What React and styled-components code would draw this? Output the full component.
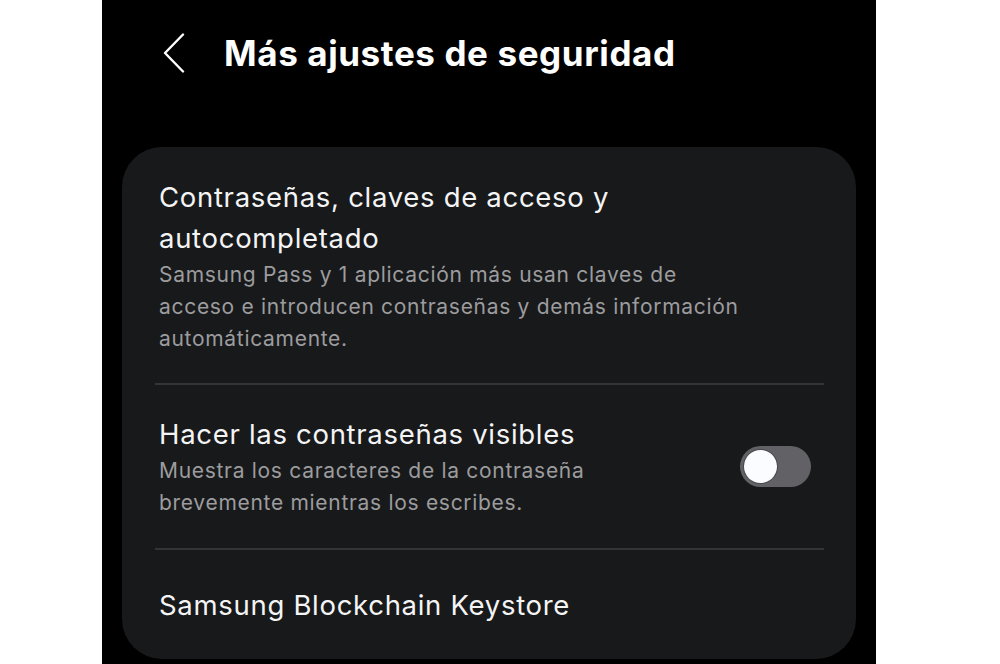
import styled, { createGlobalStyle } from "styled-components";

const GlobalStyle = createGlobalStyle`
  html, body {
    margin: 0;
    padding: 0;
    background: #ffffff;
  }
  body {
    font-family: Inter, "Noto Sans", "Liberation Sans", sans-serif;
    -webkit-font-smoothing: antialiased;
  }
`;

const Page = styled.div`
  width: 1000px;
  height: 664px;
  padding-left: 102px;
  box-sizing: border-box;
  overflow: hidden;
`;

const Screen = styled.div`
  width: 774px;
  height: 664px;
  background: #000000;
  display: flex;
  flex-direction: column;
  overflow: hidden;
`;

const Header = styled.header`
  height: 147px;
  display: flex;
  align-items: flex-start;
  padding: 33px 0 0 59px;
  box-sizing: border-box;
`;

const BackButton = styled.button`
  width: 24px;
  height: 40px;
  padding: 0;
  border: none;
  background: none;
  display: flex;
  align-items: center;
  justify-content: center;
  margin-right: 39px;
`;

const Title = styled.h1`
  margin: 0;
  color: #ffffff;
  font-size: 35px;
  font-weight: 700;
  line-height: 40px;
  letter-spacing: 0.6px;
`;

const Card = styled.section`
  margin: 0 20px;
  width: 734px;
  height: 512px;
  background: #18191b;
  border-radius: 40px;
  overflow: hidden;
`;

const Row = styled.div`
  display: flex;
  align-items: center;
  padding: ${(p) => p.$pad || "30px 45px 28px 37px"};
`;

const Divider = styled.div`
  height: 2px;
  margin: 0 32px 0 33px;
  background: #333436;
`;

const TextBlock = styled.div`
  flex: 1;
  min-width: 0;
`;

const RowTitle = styled.div`
  color: #f4f4f5;
  font-size: 27.5px;
  line-height: 41px;
  letter-spacing: 0.7px;
`;

const RowSub = styled.div`
  color: #9c9c9e;
  font-size: 21px;
  line-height: 32px;
  letter-spacing: 0.7px;
`;

const Toggle = styled.div`
  width: 71px;
  height: 41px;
  border-radius: 21px;
  background: #626266;
  position: relative;
  flex-shrink: 0;
`;

const Knob = styled.span`
  position: absolute;
  left: 4px;
  top: 4px;
  width: 33px;
  height: 33px;
  border-radius: 50%;
  background: #fbfcff;
  box-shadow: 0 0 0 1px rgba(0, 0, 0, 0.25);
`;

function ChevronLeft() {
  return (
    <svg width="24" height="40" viewBox="0 0 24 40" fill="none">
      <path
        d="M22 1.5 L4 20 L22 38.5"
        stroke="#ffffff"
        strokeWidth="2.4"
        strokeLinecap="round"
        strokeLinejoin="round"
      />
    </svg>
  );
}

export default function App() {
  return (
    <>
      <GlobalStyle />
      <Page>
        <Screen>
          <Header>
            <BackButton aria-label="Atrás">
              <ChevronLeft />
            </BackButton>
            <Title>Más ajustes de seguridad</Title>
          </Header>
          <Card>
            <Row>
              <TextBlock>
                <RowTitle>
                  Contraseñas, claves de acceso y
                  <br />
                  autocompletado
                </RowTitle>
                <RowSub>
                  Samsung Pass y 1 aplicación más usan claves de
                  <br />
                  acceso e introducen contraseñas y demás información
                  <br />
                  automáticamente.
                </RowSub>
              </TextBlock>
            </Row>
            <Divider />
            <Row $pad="29px 45px 29px 37px">
              <TextBlock>
                <RowTitle>Hacer las contraseñas visibles</RowTitle>
                <RowSub>
                  Muestra los caracteres de la contraseña
                  <br />
                  brevemente mientras los escribes.
                </RowSub>
              </TextBlock>
              <Toggle>
                <Knob />
              </Toggle>
            </Row>
            <Divider />
            <Row $pad="35px 45px 30px 37px">
              <TextBlock>
                <RowTitle>Samsung Blockchain Keystore</RowTitle>
              </TextBlock>
            </Row>
          </Card>
        </Screen>
      </Page>
    </>
  );
}
